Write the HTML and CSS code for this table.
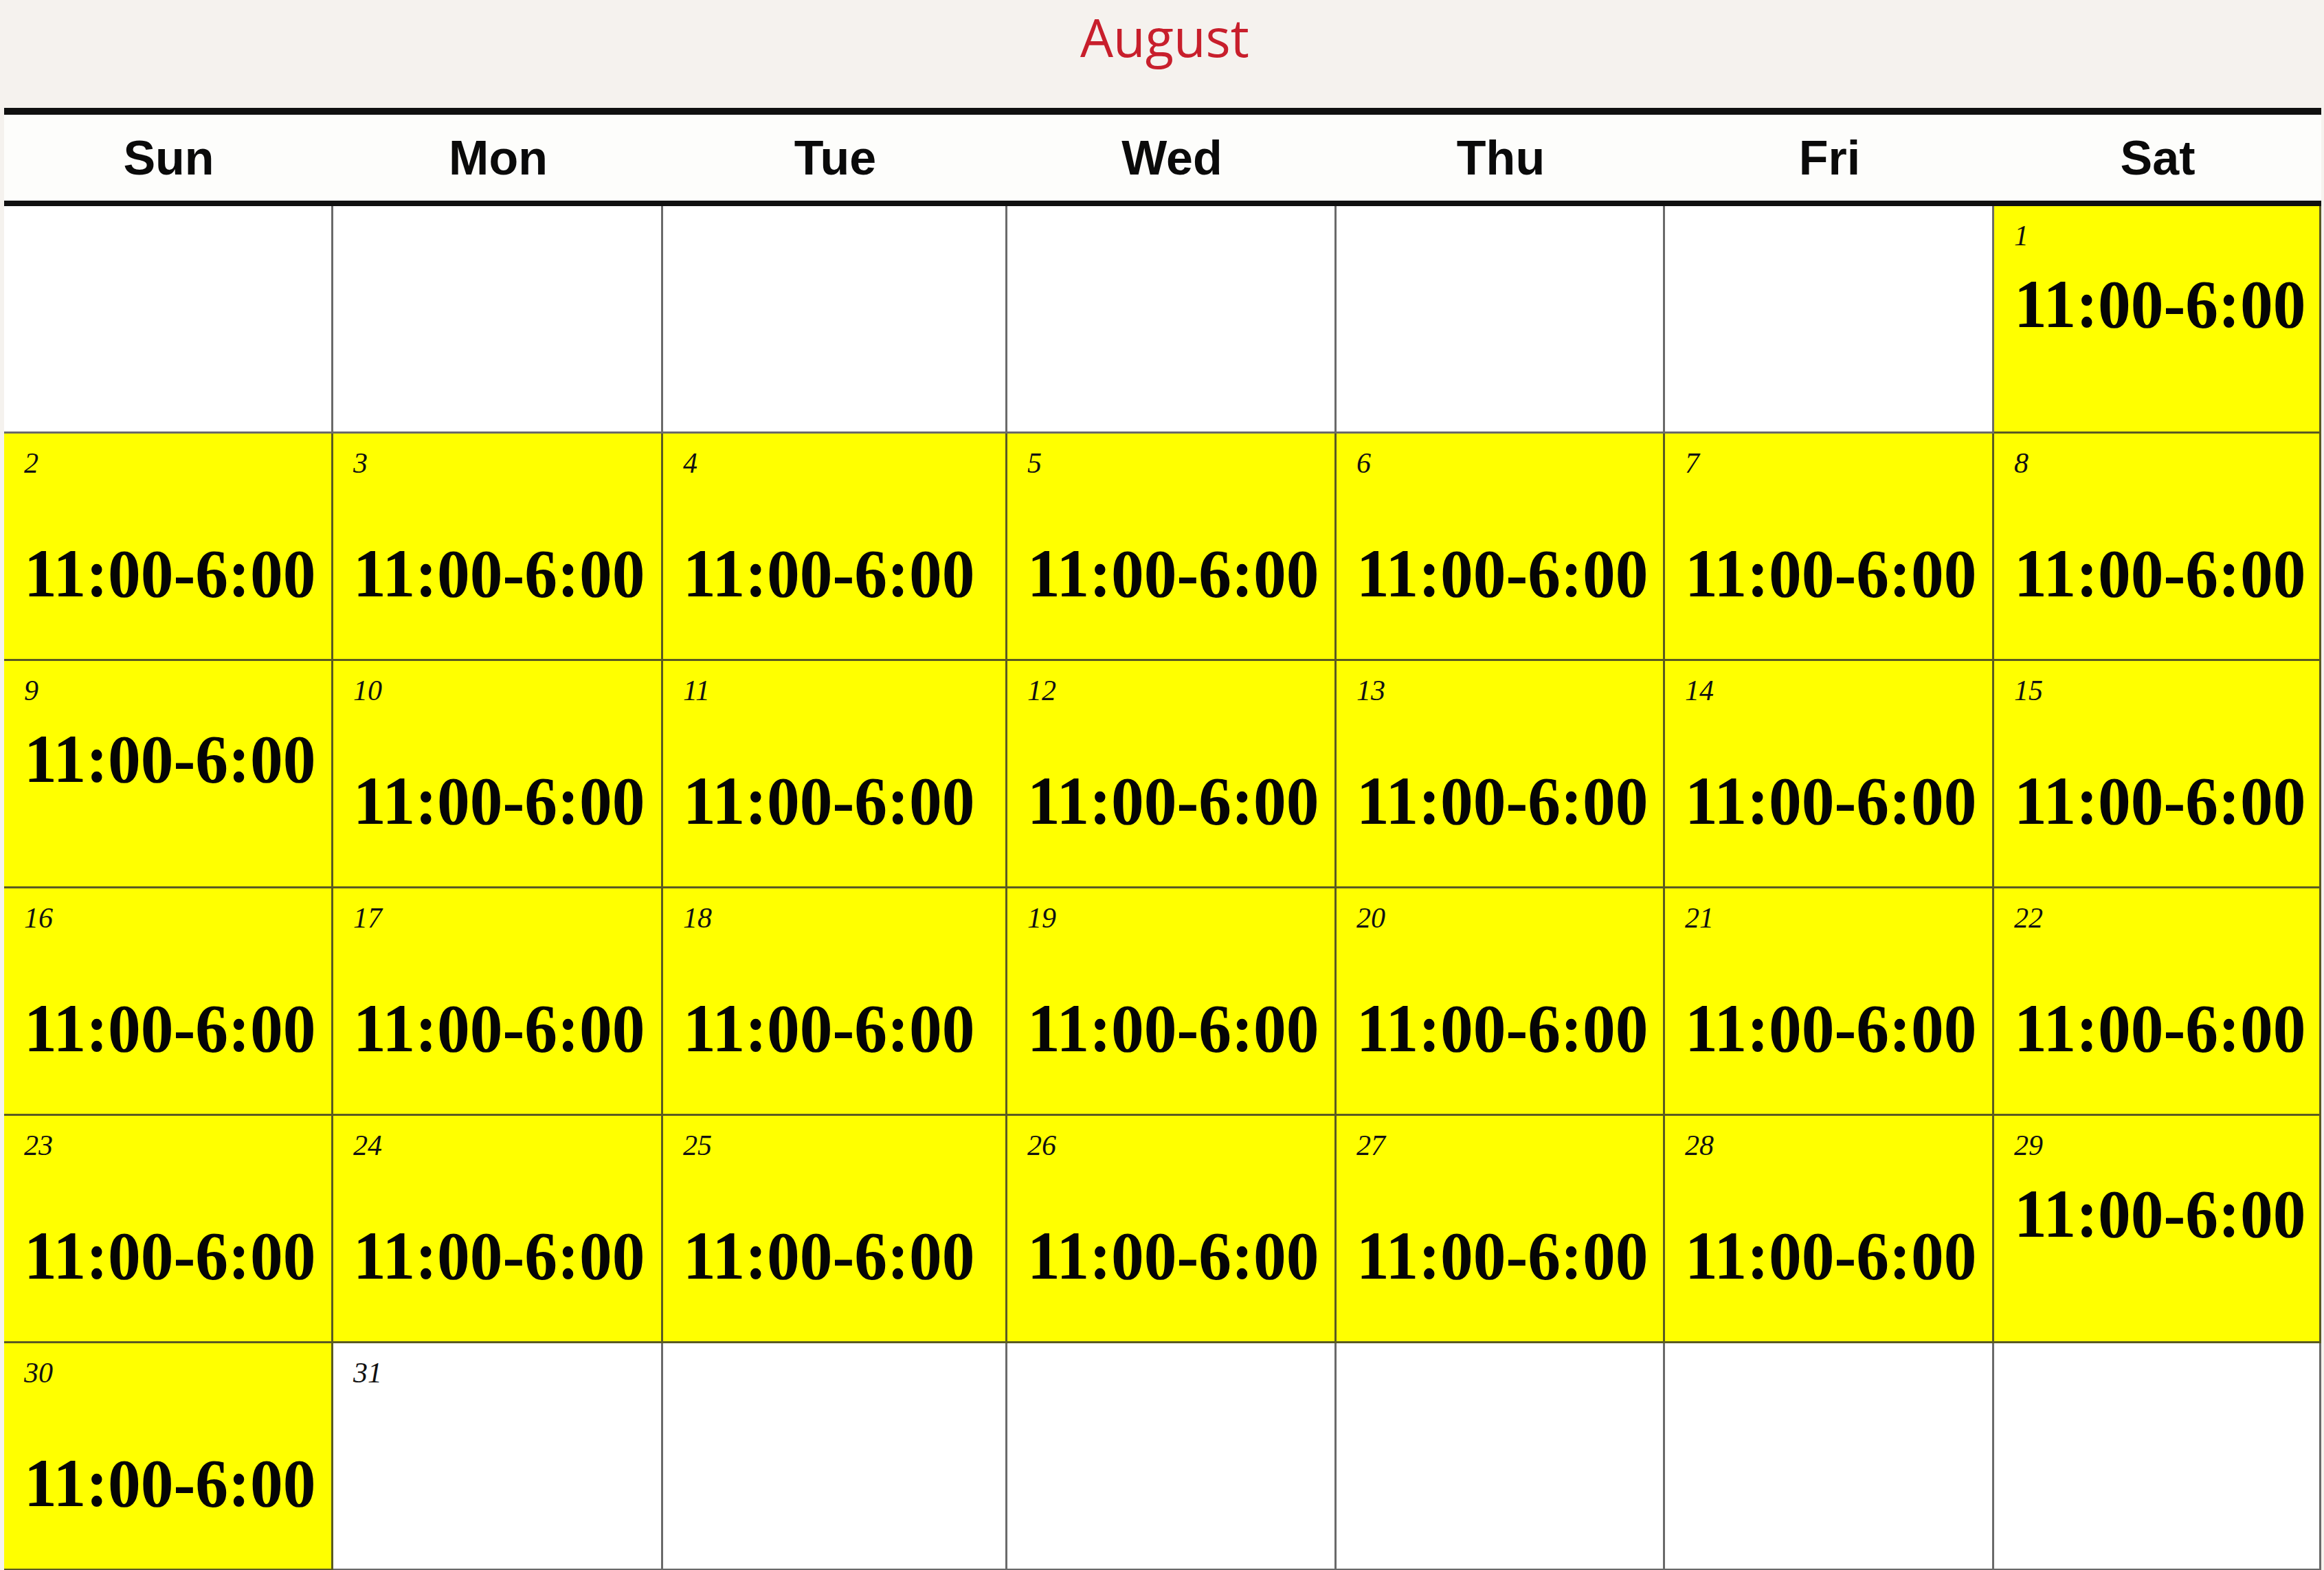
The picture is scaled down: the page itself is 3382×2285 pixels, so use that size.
FILE: index.html
```html
<!DOCTYPE html>
<html lang="en">
<head>
<meta charset="utf-8">
<title>August</title>
<link rel="stylesheet" href="styles.css">
</head>
<body>
<div class="page">
  <header class="title-bar"><h1 class="month">August</h1></header>
  <section class="calendar">
    <div class="weekdays">
      <div class="wd">Sun</div><div class="wd">Mon</div><div class="wd">Tue</div><div class="wd">Wed</div><div class="wd">Thu</div><div class="wd">Fri</div><div class="wd">Sat</div>
    </div>
    <div class="grid">
      <div class="cell"></div>
      <div class="cell"></div>
      <div class="cell"></div>
      <div class="cell"></div>
      <div class="cell"></div>
      <div class="cell"></div>
      <div class="cell open"><div class="day">1</div><div class="time high"><span>11:00-6:00</span></div></div>

      <div class="cell open"><div class="day">2</div><div class="time"><span>11:00-6:00</span></div></div>
      <div class="cell open"><div class="day">3</div><div class="time"><span>11:00-6:00</span></div></div>
      <div class="cell open"><div class="day">4</div><div class="time"><span>11:00-6:00</span></div></div>
      <div class="cell open"><div class="day">5</div><div class="time"><span>11:00-6:00</span></div></div>
      <div class="cell open"><div class="day">6</div><div class="time"><span>11:00-6:00</span></div></div>
      <div class="cell open"><div class="day">7</div><div class="time"><span>11:00-6:00</span></div></div>
      <div class="cell open"><div class="day">8</div><div class="time"><span>11:00-6:00</span></div></div>

      <div class="cell open"><div class="day">9</div><div class="time high"><span>11:00-6:00</span></div></div>
      <div class="cell open"><div class="day">10</div><div class="time"><span>11:00-6:00</span></div></div>
      <div class="cell open"><div class="day">11</div><div class="time"><span>11:00-6:00</span></div></div>
      <div class="cell open"><div class="day">12</div><div class="time"><span>11:00-6:00</span></div></div>
      <div class="cell open"><div class="day">13</div><div class="time"><span>11:00-6:00</span></div></div>
      <div class="cell open"><div class="day">14</div><div class="time"><span>11:00-6:00</span></div></div>
      <div class="cell open"><div class="day">15</div><div class="time"><span>11:00-6:00</span></div></div>

      <div class="cell open"><div class="day">16</div><div class="time"><span>11:00-6:00</span></div></div>
      <div class="cell open"><div class="day">17</div><div class="time"><span>11:00-6:00</span></div></div>
      <div class="cell open"><div class="day">18</div><div class="time"><span>11:00-6:00</span></div></div>
      <div class="cell open"><div class="day">19</div><div class="time"><span>11:00-6:00</span></div></div>
      <div class="cell open"><div class="day">20</div><div class="time"><span>11:00-6:00</span></div></div>
      <div class="cell open"><div class="day">21</div><div class="time"><span>11:00-6:00</span></div></div>
      <div class="cell open"><div class="day">22</div><div class="time"><span>11:00-6:00</span></div></div>

      <div class="cell open"><div class="day">23</div><div class="time"><span>11:00-6:00</span></div></div>
      <div class="cell open"><div class="day">24</div><div class="time"><span>11:00-6:00</span></div></div>
      <div class="cell open"><div class="day">25</div><div class="time"><span>11:00-6:00</span></div></div>
      <div class="cell open"><div class="day">26</div><div class="time"><span>11:00-6:00</span></div></div>
      <div class="cell open"><div class="day">27</div><div class="time"><span>11:00-6:00</span></div></div>
      <div class="cell open"><div class="day">28</div><div class="time"><span>11:00-6:00</span></div></div>
      <div class="cell open"><div class="day">29</div><div class="time high"><span>11:00-6:00</span></div></div>

      <div class="cell open"><div class="day">30</div><div class="time"><span>11:00-6:00</span></div></div>
      <div class="cell"><div class="day">31</div></div>
      <div class="cell"></div>
      <div class="cell"></div>
      <div class="cell"></div>
      <div class="cell"></div>
      <div class="cell"></div>
    </div>
  </section>
</div>
</body>
</html>
```

FILE: styles.css
```css
* {
  box-sizing: border-box;
}

html, body {
  margin: 0;
  padding: 0;
}

body {
  background: #f5f2ee;
  width: 3382px;
  height: 2285px;
  overflow: hidden;
}

.page {
  width: 3382px;
}

.title-bar {
  height: 157px;
  display: flex;
  justify-content: center;
}

.month {
  margin: 0;
  padding-left: 8px;
  padding-top: 4px;
  font-family: "Open Sans", "DejaVu Sans", sans-serif;
  font-weight: 400;
  font-size: 76px;
  line-height: 100px;
  color: #c81f2c;
  letter-spacing: 0;
}

.calendar {
  margin-left: 6px;
  width: 3372px;
  background: #ffffff;
}

.weekdays,
.grid {
  display: grid;
  grid-template-columns: 479px 480px 501px 479px 478px 479px 476px;
}

.weekdays {
  height: 143px;
  border-top: 10px solid #101010;
  border-bottom: 8px solid #101010;
  background: #fdfdfb;
}

.wd {
  display: flex;
  align-items: center;
  justify-content: center;
  font-family: "Liberation Sans", Arial, sans-serif;
  font-weight: 700;
  font-size: 70px;
  color: #0a0a0a;
}

.grid {
  grid-auto-rows: 331px;
}

.cell {
  background: #ffffff;
  border-right: 3px solid #6a6a6a;
  border-bottom: 3px solid #6a6a6a;
  padding: 19px 0 0 29px;
  overflow: hidden;
}

.cell.open {
  background: #ffff00;
  border-color: #5a5a22;
}

.day {
  font-family: "Liberation Serif", "Times New Roman", serif;
  font-style: italic;
  font-size: 42px;
  line-height: 48px;
  color: #111;
}

.day::first-letter {
  letter-spacing: 0;
}

.time {
  margin-top: 82px;
  font-family: "Liberation Serif", "Times New Roman", serif;
  font-weight: 700;
  font-size: 100px;
  line-height: 110px;
  color: #050505;
  white-space: nowrap;
}

.time.high {
  margin-top: 21px;
}

.time span {
  display: inline-block;
  transform: scaleX(0.955);
  transform-origin: left center;
}
```
